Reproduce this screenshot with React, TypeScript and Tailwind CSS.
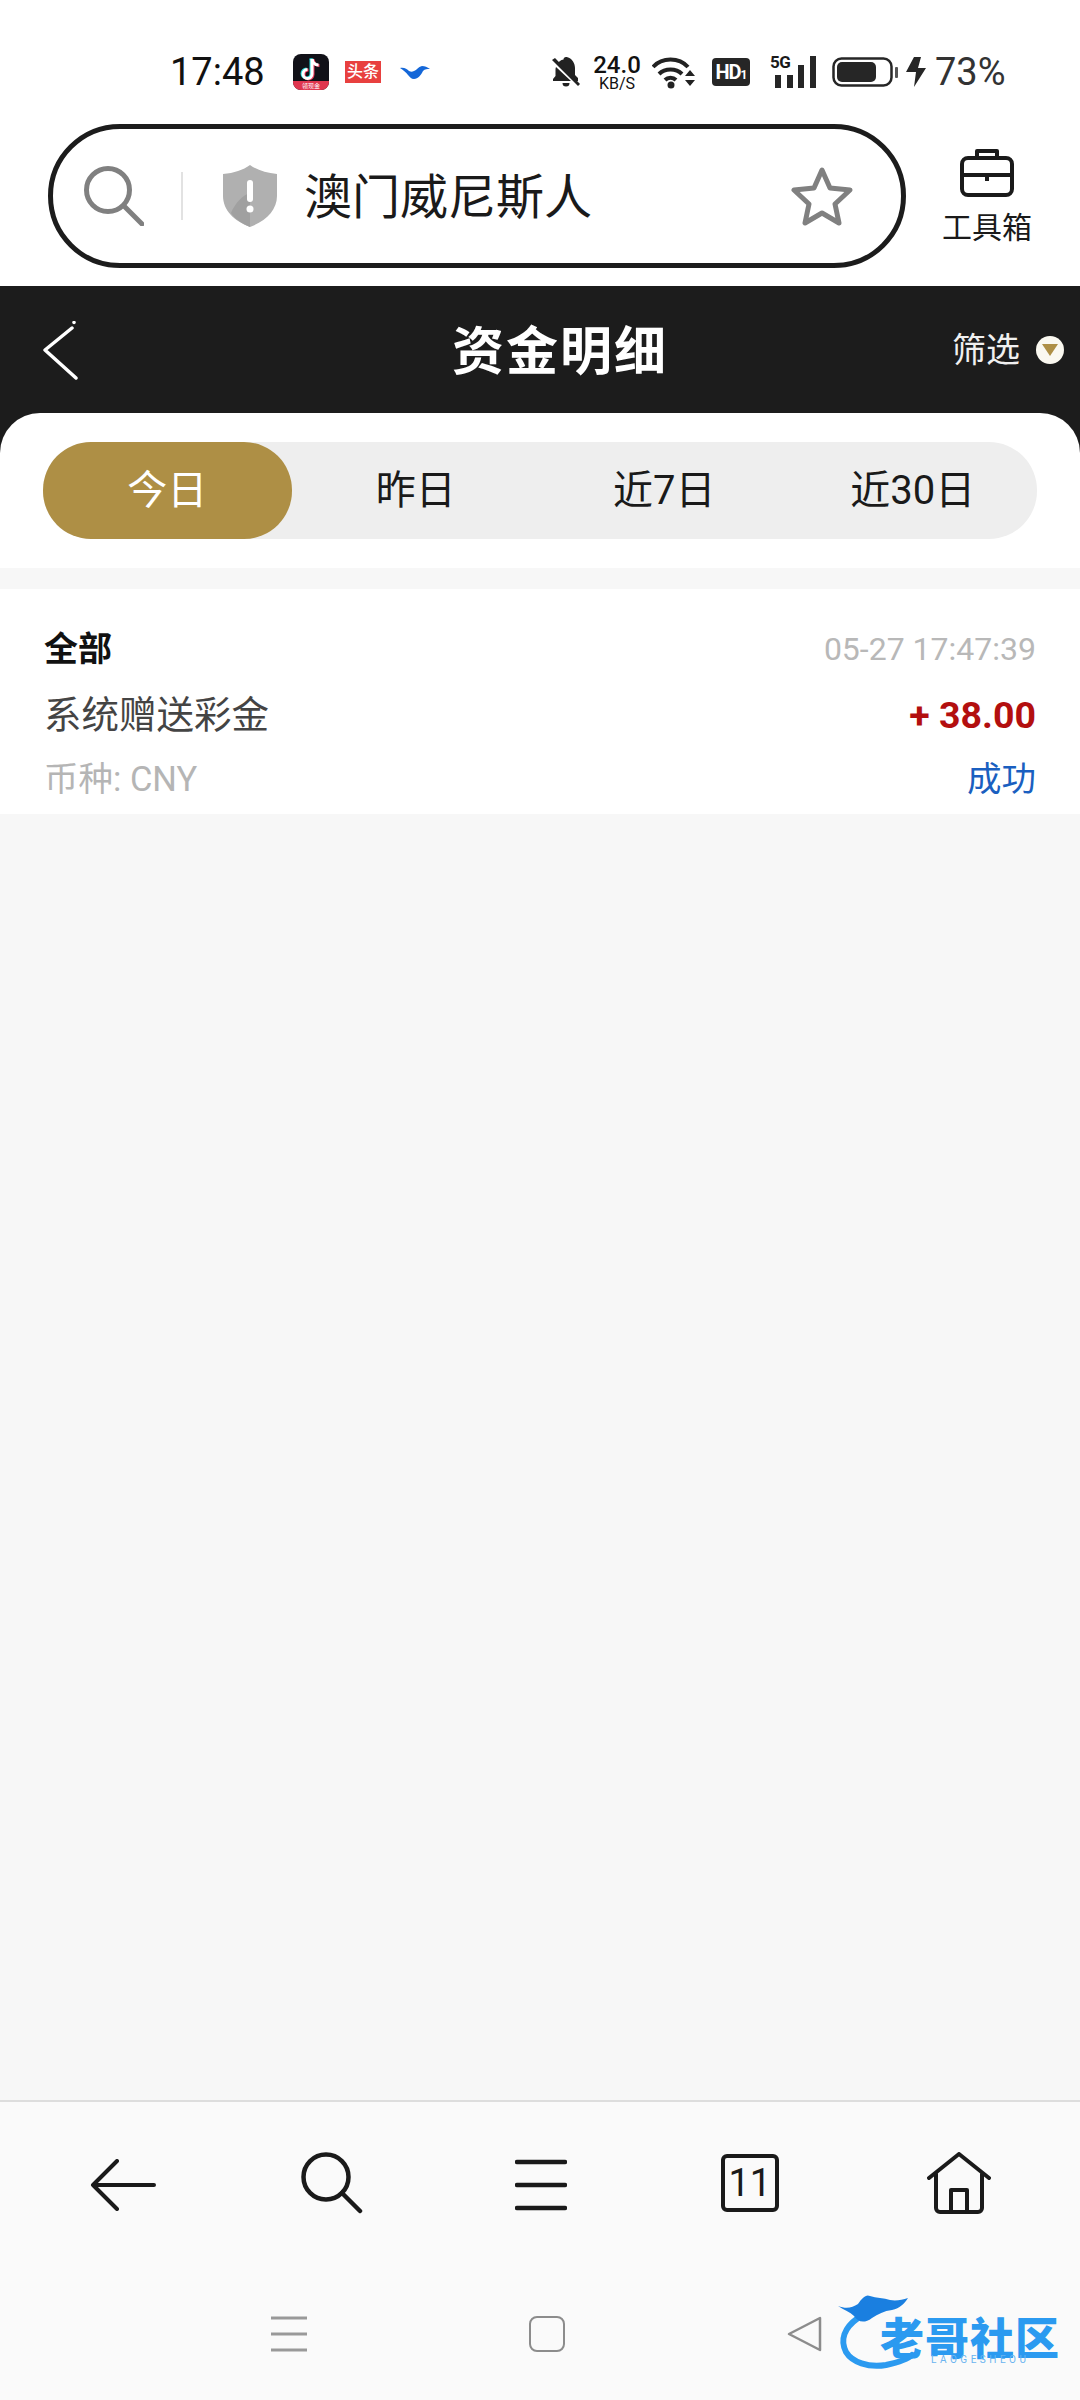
import React from 'react';

const FONT = "font-['Roboto','Noto_Sans_CJK_SC',sans-serif]";

const TikTokIcon = () => (
  <div className="relative w-[36px] h-[36px] rounded-[8px] bg-[#111118] overflow-hidden">
    <svg viewBox="0 0 36 36" className="absolute inset-0 w-[36px] h-[36px]" fill="none">
      <path d="M19 5v15a4.500 4.500 0 1 1-4.500-4.500" stroke="#25d8dc" strokeWidth="3" transform="translate(-1 -0.5)" />
      <path d="M19 5c.5 3.500 3 6 6.500 6" stroke="#25d8dc" strokeWidth="3" transform="translate(-1 -0.5)" />
      <path d="M19 5v15a4.500 4.500 0 1 1-4.500-4.500" stroke="#f0375a" strokeWidth="3" transform="translate(1 0.5)" />
      <path d="M19 5c.5 3.500 3 6 6.500 6" stroke="#f0375a" strokeWidth="3" transform="translate(1 0.5)" />
      <path d="M19 5v15a4.500 4.500 0 1 1-4.500-4.500" stroke="#fff" strokeWidth="3" />
      <path d="M19 5c.5 3.500 3 6 6.500 6" stroke="#fff" strokeWidth="3" />
    </svg>
    <div className="absolute left-0 right-0 bottom-0 h-[9px] bg-[#e0364f] text-white text-[6px] leading-[9px] text-center">领现金</div>
  </div>
);

const StatusBar = () => (
  <div className={`h-[124px] pt-[20px] flex items-center bg-white text-[#1a1a1a] ${FONT}`}>
    <span className="ml-[170px] w-[96px] text-[38px] leading-none text-[#111] whitespace-nowrap">17:48</span>
    <div className="ml-[27px]"><TikTokIcon /></div>
    <div className="ml-[16px] w-[36px] h-[22px] bg-[#e8403f] text-white text-[16px] leading-[22px] font-medium text-center">头条</div>
    <svg viewBox="0 0 30 14" className="ml-[19px] w-[30px] h-[14px]" fill="#1467d8">
      <path d="M0 3c4-1 7 1 9 3 2 1 3 1 5 0 3-1 4-4 8-5 3 0 5 1 8 3-3 0-5 0-7 2-2 4-5 8-9 8-3 0-4-2-6-4C6 7 3 5 0 3z" />
    </svg>
    <svg viewBox="0 0 30 30" className="ml-[121px] w-[30px] h-[30px]" fill="#222">
      <path d="M15 0c-1.500 0-2.500 1-2.500 2.500C9.500 3 8 4.500 7 6l17 18h3v-3l-3-3v-7c0-5-3-9-6.500-10.500C17.500 1 16.500 0 15 0z" />
      <path d="M5 10c-.5 1-.5 2-.5 3v6L2 22v2h18z" />
      <path d="M11.500 26a3.500 3.500 0 0 0 7 0z" />
      <path d="M1 3l3-2 25 26-2 2z" />
    </svg>
    <div className="ml-[11px] w-[50px] flex flex-col items-center">
      <span className="text-[24px] leading-[22px] font-medium text-[#111]">24.0</span>
      <span className="text-[16px] leading-[15px] text-[#111]">KB/S</span>
    </div>
    <svg viewBox="0 0 43 33" className="ml-[10px] w-[43px] h-[33px]" fill="none">
      <path d="M1 11C10 1 27 1 36 11" stroke="#222" strokeWidth="4" />
      <path d="M7 18c6-6 17-6 23 0" stroke="#222" strokeWidth="4" />
      <path d="M13 24c3-3 8-3 11 0" stroke="#222" strokeWidth="4" />
      <circle cx="19" cy="29" r="3.500" fill="#222" />
      <path d="M33 20h10l-5-6zM33 24h10l-5 6z" fill="#222" />
    </svg>
    <div className="ml-[17px] w-[38px] h-[28px] rounded-[4px] bg-[#262626] text-white text-[20px] leading-[28px] font-bold text-center tracking-[-1px]">
      HD<span className="text-[12px]">1</span>
    </div>
    <div className="relative ml-[20px] w-[46px] h-[32px]">
      <span className="absolute left-0 top-[-2px] text-[17px] leading-[16px] font-bold tracking-[-0.5px]">5G</span>
      <svg viewBox="0 0 46 32" className="w-[46px] h-[32px]" fill="#262626">
        <rect x="5" y="19" width="6" height="13" />
        <rect x="17" y="19" width="6" height="13" />
        <rect x="28" y="9" width="6" height="23" />
        <rect x="40" y="0" width="6" height="32" />
      </svg>
    </div>
    <svg viewBox="0 0 66 30" className="ml-[16px] w-[66px] h-[30px]" fill="none">
      <rect x="1.500" y="1.500" width="58" height="27" rx="8" stroke="#262626" strokeWidth="2.500" />
      <rect x="5" y="5" width="39" height="20" rx="5" fill="#262626" />
      <rect x="63" y="10" width="3" height="11" rx="1" fill="#555" />
    </svg>
    <svg viewBox="0 0 20 30" className="ml-[8px] w-[20px] h-[30px]" fill="#262626">
      <path d="M8 0h7l-3 11h8L8 30l2-15H0z" />
    </svg>
    <span className="ml-[9px] text-[38px] leading-none text-[#333]">73%</span>
  </div>
);

const SearchRow = () => (
  <div className={`flex items-start pl-[48px] h-[162px] bg-white ${FONT}`}>
    <div className="w-[858px] h-[144px] rounded-[72px] border-[5px] border-[#1c1c1c] flex items-center pl-[31px] pr-[48px]">
      <svg viewBox="0 0 60 60" className="w-[60px] h-[60px]" fill="none" stroke="#808080" strokeWidth="5" strokeLinecap="round">
        <circle cx="24" cy="24" r="21.500" />
        <path d="M41 41l17 17" />
      </svg>
      <div className="ml-[37px] w-[2px] h-[48px] bg-[#e2e2e2]" />
      <svg viewBox="0 0 54 62" className="ml-[40px] w-[54px] h-[62px]">
        <path d="M27 0c7 5 16 8 27 9v22c0 14-11 25-27 31C11 56 0 45 0 31V9c11-1 20-4 27-9z" fill="#b0b0b0" />
        <path d="M8 48c4-10 12-18 19-20v34C18 58 12 54 8 48z" fill="#a0a0a0" />
        <rect x="24" y="15" width="6" height="22" rx="3" fill="#fff" />
        <circle cx="27" cy="44" r="3.500" fill="#fff" />
      </svg>
      <span className="ml-[27px] pt-[4px] text-[48px] leading-none text-[#1a1a1a]">澳门威尼斯人</span>
      <svg viewBox="0 0 62 60" className="ml-auto w-[62px] h-[60px]" fill="none" stroke="#808080" strokeWidth="5" strokeLinejoin="round">
        <path d="M31 4l8 18 20 2-15 14 4 19-17-10-17 10 4-19L3 24l20-2z" />
      </svg>
    </div>
    <div className="ml-[36px] w-[90px] flex flex-col items-center pt-[25px]">
      <svg viewBox="0 0 54 48" className="w-[54px] h-[48px]" fill="none" stroke="#1a1a1a" strokeWidth="4" strokeLinejoin="round">
        <path d="M17 9V2h20v7" />
        <rect x="2" y="9" width="50" height="37" rx="6" />
        <path d="M2 26h50M27 26v6" />
      </svg>
      <span className="mt-[16px] text-[30px] leading-none text-[#1a1a1a] whitespace-nowrap">工具箱</span>
    </div>
  </div>
);

const Header = () => (
  <div className={`relative h-[127px] shrink-0 bg-[#1c1c1c] flex items-start justify-center pt-[38px] ${FONT}`}>
    <svg viewBox="0 0 36 60" className="absolute left-[42px] top-[35px] w-[36px] h-[60px]" fill="none" stroke="#fff" strokeWidth="3.500" strokeLinecap="round" strokeLinejoin="round">
      <path d="M30 7L3 29l31 28" />
      <path d="M32 1.500v.1" />
    </svg>
    <h1 className="ml-[40px] text-[52px] leading-[58px] font-bold text-white tracking-[2px]">资金明细</h1>
    <div className="absolute right-[16px] top-[44px] flex items-center">
      <span className="text-[34px] leading-[40px] text-[#f0f0f0]">筛选</span>
      <div className="ml-[16px] w-[28px] h-[28px] rounded-full bg-[#faf8f0] flex items-center justify-center">
        <svg viewBox="0 0 16 12" className="w-[16px] h-[12px]" fill="#ae8f45">
          <path d="M0 0h16L8 12z" />
        </svg>
      </div>
    </div>
  </div>
);

const TABS = ['今日', '昨日', '近7日', '近30日'];

const Tabs = () => (
  <div className="bg-[#1c1c1c] shrink-0">
    <div className={`h-[155px] rounded-t-[40px] bg-white pt-[29px] px-[43px] ${FONT}`}>
      <div className="grid grid-cols-4 h-[97px] rounded-[48px] bg-[#eeeeee]">
        {TABS.map((tab, i) => (
          <div
            key={tab}
            className={`flex items-center justify-center text-[40px] rounded-[48px] ${i === 0 ? 'bg-[#ae8f45] text-white' : 'text-[#1a1a1a]'}`}
          >
            {tab}
          </div>
        ))}
      </div>
    </div>
  </div>
);

const Record = () => (
  <div className={`mt-[21px] h-[225px] bg-white px-[44px] ${FONT}`}>
    <div className="flex items-center justify-between pt-[38px] h-[82px]">
      <span className="text-[34px] leading-[44px] font-bold text-[#111]">全部</span>
      <span className="text-[32px] leading-[44px] text-[#b8b8b8]">05-27 17:47:39</span>
    </div>
    <div className="flex items-center justify-between h-[44px] mt-[22px]">
      <span className="text-[37.500px] leading-[44px] text-[#444]">系统赠送彩金</span>
      <span className="text-[37.500px] leading-[44px] font-bold text-[#b30f0f]">+ 38.00</span>
    </div>
    <div className="flex items-center justify-between h-[44px] mt-[20px]">
      <span className="text-[34.500px] leading-[44px] text-[#b5b5b5]">币种: CNY</span>
      <span className="text-[34.500px] leading-[44px] text-[#1a5fc0]">成功</span>
    </div>
  </div>
);

const BottomNav = () => (
  <div className="h-[176px] shrink-0 border-t-2 border-[#dddddd] bg-[#fafafa] grid grid-cols-5 pl-[19px] pr-[17px] pt-[50px]">
    <div className="flex justify-center">
      <svg viewBox="0 0 66 52" className="w-[66px] h-[52px] mt-[7px]" fill="none" stroke="#1a1a1a" strokeWidth="4" strokeLinecap="round" strokeLinejoin="round">
        <path d="M27 2L3 26l24 24M3 26h61" />
      </svg>
    </div>
    <div className="flex justify-center">
      <svg viewBox="0 0 62 62" className="w-[62px] h-[62px]" fill="none" stroke="#1a1a1a" strokeWidth="4.500" strokeLinecap="round">
        <circle cx="25" cy="25" r="22.500" />
        <path d="M41 41l18 18" />
      </svg>
    </div>
    <div className="flex justify-center">
      <svg viewBox="0 0 52 52" className="w-[52px] h-[52px] mt-[7px]" fill="none" stroke="#1a1a1a" strokeWidth="4.500" strokeLinecap="round">
        <path d="M2 3h48M2 26h48M2 49h48" />
      </svg>
    </div>
    <div className="flex justify-center">
      <div className="w-[58px] h-[58px] mt-[2px] rounded-[6px] border-[4px] border-[#1a1a1a] flex items-center justify-center font-['Roboto',sans-serif] text-[38px] leading-none text-[#1a1a1a]">
        11
      </div>
    </div>
    <div className="flex justify-center">
      <svg viewBox="0 0 64 62" className="w-[64px] h-[62px]" fill="none" stroke="#1a1a1a" strokeWidth="4" strokeLinecap="round" strokeLinejoin="round">
        <path d="M2 26L32 2l30 24" />
        <path d="M9 22v34a4 4 0 0 0 4 4h38a4 4 0 0 0 4-4V22" />
        <path d="M24 60V38h16v22" />
      </svg>
    </div>
  </div>
);

const NavKeys = () => (
  <div className="relative flex-1 bg-[#fafafa] grid grid-cols-3 pl-[160px] pr-[146px] pt-[40px]">
    <div className="flex justify-center">
      <svg viewBox="0 0 36 36" className="w-[36px] h-[36px]" fill="none" stroke="#999" strokeWidth="3">
        <path d="M0 2h36M0 18h36M0 34h36" />
      </svg>
    </div>
    <div className="flex justify-center">
      <div className="w-[36px] h-[36px] rounded-[8px] border-[2.500px] border-[#8c8c8c]" />
    </div>
    <div className="flex justify-center">
      <svg viewBox="0 0 36 36" className="w-[36px] h-[36px]" fill="none" stroke="#8c8c8c" strokeWidth="2.500" strokeLinejoin="round">
        <path d="M33 2v32L2 18z" />
      </svg>
    </div>
    {/* watermark on top of the nav keys */}
    <div className="absolute left-[838px] top-[16px] w-[230px] h-[84px]">
      <svg viewBox="0 0 80 80" className="absolute left-0 top-0 w-[80px] h-[80px]" fill="none">
        <path d="M20 26C6 36 2 48 8 60c6 10 22 16 40 13 14-3 22-6 26-10" stroke="#2b9af0" strokeWidth="6" strokeLinecap="round" />
        <path d="M0 14c8 3 14 2 20-2 4-6 8-10 12-8 6 2 14 2 20 4 6 1 12 0 18-2-4 6-8 10-16 12-8 1-14 4-20 8-8 6-14 4-18-2C12 20 6 18 0 14z" fill="#1a7fe0" />
      </svg>
      <span className="absolute left-[42px] top-[27px] text-[44px] leading-[34px] font-black tracking-[1px] text-[#2b9af0] font-['Noto_Sans_CJK_SC',sans-serif] whitespace-nowrap">老哥社区</span>
      <span className="absolute left-[93px] top-[62px] text-[10px] leading-[12px] tracking-[3.500px] text-[#6ab4f0] font-['Roboto',sans-serif]">LAOGESHEOU</span>
    </div>
  </div>
);

export default function App() {
  return (
    <div className="w-[1080px] h-[2400px] flex flex-col bg-[#f7f7f7] overflow-hidden">
      <StatusBar />
      <SearchRow />
      <Header />
      <Tabs />
      <Record />
      <div className="flex-1" />
      <BottomNav />
      <div className="h-[124px] shrink-0 flex"><NavKeys /></div>
    </div>
  );
}
